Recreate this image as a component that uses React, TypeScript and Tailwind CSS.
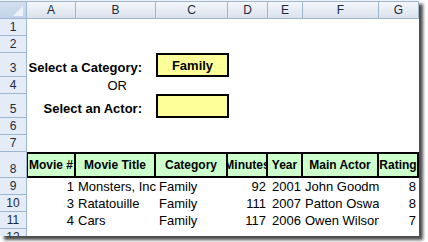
import React from "react";

// Excel 2007 style sheet: movie lookup with category / actor pickers
const font = "font-['Liberation_Sans',Arial,sans-serif]";

const cols = [
  { id: "A", w: "w-[49px]" },
  { id: "B", w: "w-[80px]" },
  { id: "C", w: "w-[72px]" },
  { id: "D", w: "w-[40px]" },
  { id: "E", w: "w-[35px]" },
  { id: "F", w: "w-[76px]" },
  { id: "G", w: "w-[40px]" },
];

const movies = [
  { no: 1, title: "Monsters, Inc", cat: "Family", min: 92, year: 2001, actor: "John Goodman", rating: 8 },
  { no: 3, title: "Ratatouille", cat: "Family", min: 111, year: 2007, actor: "Patton Oswalt", rating: 8 },
  { no: 4, title: "Cars", cat: "Family", min: 117, year: 2006, actor: "Owen Wilson", rating: 7 },
];

function RowHead({ n }: { n: number }) {
  return (
    <div className="w-[27px] shrink-0 flex items-end justify-center pb-[1px] bg-[#e4ecf7] border-r border-b border-[#9eb6ce] text-[12px] leading-[14px] text-[#1b2a3c]">
      {n}
    </div>
  );
}

function Row({ n, h, children }: { n: number; h: string; children?: React.ReactNode }) {
  return (
    <div className={"flex shrink-0 " + h}>
      <RowHead n={n} />
      {children}
    </div>
  );
}

export default function App() {
  return (
    <div className={"relative w-[428px] h-[242px] bg-white overflow-hidden " + font}>
      <div className="w-[419px] h-[236px] overflow-hidden bg-white flex flex-col shadow-[4px_4px_3px_rgba(0,0,0,0.7)]">
        {/* top edge */}
        <div className="h-[2px] shrink-0 bg-[#eef2f8] border-b border-[#9eb6ce]" />

        {/* column letters */}
        <div className="flex h-[17px] shrink-0 border-b border-[#9eb6ce] bg-linear-to-b from-[#f4f7fb] to-[#dbe2ec]">
          <div className="relative w-[27px] shrink-0 border-r border-[#9eb6ce] bg-linear-to-b from-[#d3dfef] to-[#c2d3ea]">
            <svg className="absolute right-[3px] bottom-[2px]" width="10" height="10" viewBox="0 0 10 10">
              <polygon points="10,0 10,10 0,10" fill="#eef3fa" />
            </svg>
          </div>
          {cols.map((c) => (
            <div
              key={c.id}
              className={c.w + " shrink-0 flex items-center justify-center border-r border-[#9eb6ce] text-[12px] text-[#1b2a3c]"}
            >
              {c.id}
            </div>
          ))}
        </div>

        <Row n={1} h="h-[17px]" />
        <Row n={2} h="h-[17px]" />

        <Row n={3} h="h-[24px]">
          <div className="w-[129px] shrink-0 flex items-end justify-end pr-[14px] pb-[2px] text-[13px] leading-[15px] font-bold text-black whitespace-nowrap">
            Select a Category:
          </div>
          <div className="w-[73px] shrink-0 flex items-end justify-center pb-[2px] bg-[#ffff99] border-2 border-black text-[13px] leading-[15px] font-bold text-black">
            Family
          </div>
        </Row>

        <Row n={4} h="h-[17px]">
          <div className="w-[129px] shrink-0 flex items-end justify-end pr-[29px] pb-[1px] text-[13px] leading-[15px] text-black">
            OR
          </div>
        </Row>

        <Row n={5} h="h-[24px]">
          <div className="w-[129px] shrink-0 flex items-end justify-end pr-[14px] pb-[2px] text-[13px] leading-[15px] font-bold text-black whitespace-nowrap">
            Select an Actor:
          </div>
          <div className="w-[73px] shrink-0 bg-[#ffff99] border-2 border-black" />
        </Row>

        <Row n={6} h="h-[17px]" />
        <Row n={7} h="h-[17px]" />

        <Row n={8} h="h-[26px]">
          {["Movie #", "Movie Title", "Category", "Minutes", "Year", "Main Actor", "Rating"].map((t, i) => (
            <div
              key={t}
              className={
                cols[i].w +
                " shrink-0 flex items-center justify-center overflow-hidden whitespace-nowrap bg-[#ccffcc] border-y-2 border-r-2 border-black text-[12px] font-bold text-black" +
                (i === 0 ? " border-l" : "")
              }
            >
              {t}
            </div>
          ))}
        </Row>

        {movies.map((m, i) => (
          <Row key={m.no} n={9 + i} h="h-[17px]">
            <div className="w-[49px] shrink-0 flex items-end justify-end pr-[2px] pb-[1px] text-[13px] leading-[15px]">{m.no}</div>
            <div className="w-[80px] shrink-0 flex items-end pl-[2px] pb-[1px] overflow-hidden whitespace-nowrap text-[13px] leading-[15px]">
              {m.title}
            </div>
            <div className="w-[72px] shrink-0 flex items-end pl-[3px] pb-[1px] text-[13px] leading-[15px]">{m.cat}</div>
            <div className="w-[40px] shrink-0 flex items-end justify-end pr-[2px] pb-[1px] text-[13px] leading-[15px]">{m.min}</div>
            <div className="w-[35px] shrink-0 flex items-end justify-end pr-[2px] pb-[1px] text-[13px] leading-[15px]">{m.year}</div>
            <div className="w-[76px] shrink-0 flex items-end pl-[2px] pb-[1px] overflow-hidden whitespace-nowrap text-[13px] leading-[15px]">
              {m.actor}
            </div>
            <div className="w-[40px] shrink-0 flex items-end justify-end pr-[3px] pb-[1px] text-[13px] leading-[15px]">{m.rating}</div>
          </Row>
        ))}

        <Row n={12} h="h-[17px]" />
      </div>
    </div>
  );
}
